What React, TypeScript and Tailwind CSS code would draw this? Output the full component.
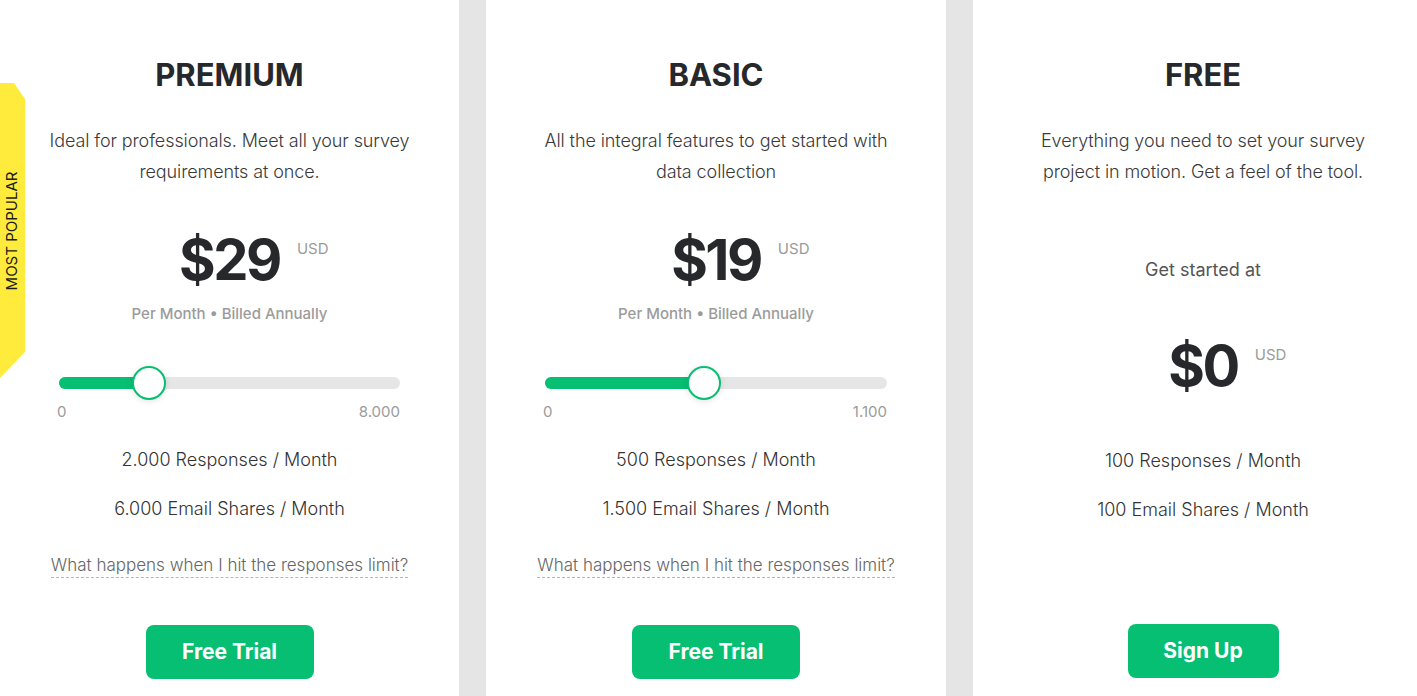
import type { ReactNode } from "react";

type PlanProps = {
  title: string;
  lines: string[];
  price: string;
  responses: string;
  shares: string;
  cta: string;
  ctaWidth: string;
  slider?: { fill: number; max: string };
  intro?: boolean;
  width: string;
  children?: ReactNode;
};

function PriceTag({ price }: { price: string }) {
  return (
    <div className="flex justify-center">
      <div className="relative">
        <span className="block text-[56px] font-bold leading-[64px] tracking-[-2.5px] text-[#26282c]">{price}</span>
        <span className="absolute left-full top-[12px] ml-[17px] text-[15px] leading-[18px] text-[#9b9b9b]">USD</span>
      </div>
    </div>
  );
}

function Slider({ fill, max }: { fill: number; max: string }) {
  return (
    <div className="mt-[42px]">
      <div className="relative flex h-[34px] items-center">
        <div className="h-[12px] w-full rounded-full bg-[#e6e6e6]">
          <div className="h-full rounded-l-full bg-[#06bf72]" style={{ width: fill }} />
        </div>
        <div
          className="absolute top-0 h-[34px] w-[34px] -translate-x-1/2 rounded-full border-2 border-[#06bf72] bg-white shadow-[0_1px_6px_rgba(0,0,0,0.12)]"
          style={{ left: fill }}
        />
      </div>
      <div className="mt-[2px] flex justify-between text-[15px] leading-[20px] text-[#9b9b9b]">
        <span className="-ml-[2px]">0</span>
        <span>{max}</span>
      </div>
    </div>
  );
}

function Plan({ title, lines, price, responses, shares, cta, ctaWidth, slider, intro, width, children }: PlanProps) {
  return (
    <div className={`relative shrink-0 bg-white px-[59px] pt-[56px] text-center ${width}`}>
      {children}
      <h2 className="text-[31px] font-bold leading-[38px] text-[#26282c]">{title}</h2>
      <p className="-mx-[59px] mt-[31px] text-[18px] font-light leading-[31px] tracking-[-0.1px] text-[#3a3a3a]">
        {lines.map((l) => (
          <span key={l} className="block whitespace-nowrap">{l}</span>
        ))}
      </p>

      {intro ? (
        <>
          <p className="mt-[71px] text-[18px] leading-[24px] text-[#555]">Get started at</p>
          <div className="mt-[52px]">
            <PriceTag price={price} />
          </div>
          <p className="mt-[51px] text-[18px] font-light leading-[24px] text-[#333]">{responses}</p>
          <p className="mt-[25px] text-[18px] font-light leading-[24px] text-[#333]">{shares}</p>
          <button className={`mx-auto mt-[102px] block h-[54px] rounded-[8px] bg-[#06bf72] text-[21px] font-bold text-white ${ctaWidth}`}>
            {cta}
          </button>
        </>
      ) : (
        <>
          <div className="mt-[41px]">
            <PriceTag price={price} />
          </div>
          <p className="mt-[12px] text-[15px] font-medium leading-[20px] text-[#9b9b9b]">Per Month • Billed Annually</p>
          {slider && <Slider fill={slider.fill} max={slider.max} />}
          <p className="mt-[26px] text-[18px] font-light leading-[24px] text-[#333]">{responses}</p>
          <p className="mt-[25px] text-[18px] font-light leading-[24px] text-[#333]">{shares}</p>
          <div className="-mx-[59px] mt-[32px]">
            <span className="inline-block whitespace-nowrap border-b border-dashed border-[#b5b5b5] text-[17px] font-light leading-[24px] text-[#666]">
              What happens when I hit the responses limit?
            </span>
          </div>
          <button className={`mx-auto mt-[47px] block h-[54px] rounded-[8px] bg-[#06bf72] text-[21px] font-bold text-white ${ctaWidth}`}>
            {cta}
          </button>
        </>
      )}
    </div>
  );
}

export default function App() {
  return (
    <div className="flex h-[696px] w-[1417px] overflow-hidden bg-white font-['Inter',sans-serif]">
      <Plan
        width="w-[459px]"
        title="PREMIUM"
        lines={["Ideal for professionals. Meet all your survey", "requirements at once."]}
        price="$29"
        slider={{ fill: 90, max: "8.000" }}
        responses="2.000 Responses / Month"
        shares="6.000 Email Shares / Month"
        cta="Free Trial"
        ctaWidth="w-[168px]"
      >
        <div className="absolute left-0 top-[83px] flex h-[295px] w-[25px] items-center justify-center bg-[#ffeb3b] [clip-path:polygon(0_0,14px_0,100%_16px,100%_calc(100%-26px),0_100%)]">
          <span className="-rotate-90 whitespace-nowrap text-[15px] leading-[18px] text-[#1c1c1c]">MOST POPULAR</span>
        </div>
      </Plan>
      <div className="w-[27px] shrink-0 bg-[#e5e5e5]" />
      <Plan
        width="w-[460px]"
        title="BASIC"
        lines={["All the integral features to get started with", "data collection"]}
        price="$19"
        slider={{ fill: 159, max: "1.100" }}
        responses="500 Responses / Month"
        shares="1.500 Email Shares / Month"
        cta="Free Trial"
        ctaWidth="w-[168px]"
      />
      <div className="w-[27px] shrink-0 bg-[#e5e5e5]" />
      <Plan
        width="w-[460px]"
        title="FREE"
        lines={["Everything you need to set your survey", "project in motion. Get a feel of the tool."]}
        price="$0"
        intro
        responses="100 Responses / Month"
        shares="100 Email Shares / Month"
        cta="Sign Up"
        ctaWidth="w-[151px]"
      />
    </div>
  );
}
